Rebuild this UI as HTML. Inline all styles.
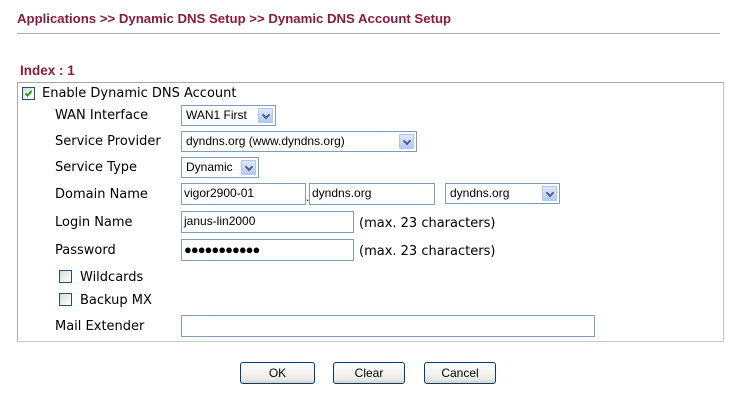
<!DOCTYPE html>
<html><head><style>
body{margin:0;width:739px;height:405px;background:#fff;position:relative;overflow:hidden;font-family:"DejaVu Sans",Verdana,sans-serif;font-size:13px;color:#000}
.a{position:absolute;white-space:nowrap}
.t{font-family:"Liberation Sans",Arial,sans-serif;font-weight:bold;color:#8b1a3b;font-size:13px}
.lbl{position:absolute;white-space:nowrap;line-height:15px}
.inp{position:absolute;box-sizing:border-box;border:1px solid #7f9db9;background:#fff;font-family:"Liberation Sans",Arial,sans-serif;font-size:12px;padding-left:4px;line-height:19px}
.sel .arr{position:absolute;right:2px;top:2px;width:15px;bottom:2px;background:linear-gradient(#dfe9fd,#b5c9f3);border:1px solid #b0c4ee;box-sizing:border-box;border-radius:1px}
.sel .arr:after{content:"";position:absolute;left:4px;width:4px;height:4px;border-right:2px solid #4d6185;border-bottom:2px solid #4d6185;transform:rotate(45deg);top:3px}
.cb{position:absolute;width:13px;height:13px;box-sizing:border-box;border:1px solid #1c5180;background:linear-gradient(135deg,#dcdcd6,#fff)}
.btn{position:absolute;box-sizing:border-box;height:22px;border:1px solid #003c74;border-radius:3px;background:linear-gradient(#fff,#ecebe6 80%,#d6d0c5);font-family:"Liberation Sans",Arial,sans-serif;font-size:12px;text-align:center;line-height:20px}
</style></head><body>
<div class="a t" style="left:17px;top:11px;font-size:13.2px">Applications &gt;&gt; Dynamic DNS Setup &gt;&gt; Dynamic DNS Account Setup</div>
<div class="a" style="left:17px;top:33px;width:703px;height:1px;background:#a9a9a9"></div>
<div class="a t" style="left:20px;top:63px;font-size:13.5px">Index : 1</div>
<div class="a" style="left:17px;top:82px;width:705px;height:258px;border:1px solid #a8a8a8;border-right-color:#c8c8c8;border-bottom-color:#c8c8c8"></div>

<div class="cb" style="left:22px;top:87px"><svg width="11" height="11" style="position:absolute;left:0;top:0"><path d="M2.5 5.5 L4.5 7.5 L8.5 3" stroke="#21a121" stroke-width="2" fill="none"/></svg></div>
<div class="lbl" style="left:42px;top:86px">Enable Dynamic DNS Account</div>

<div class="lbl" style="left:55px;top:108px">WAN Interface</div>
<div class="inp sel" style="left:181px;top:105px;width:95px;height:21px">WAN1 First<span class="arr"></span></div>

<div class="lbl" style="left:55px;top:134px">Service Provider</div>
<div class="inp sel" style="left:181px;top:131px;width:236px;height:21px">dyndns.org (www.dyndns.org)<span class="arr"></span></div>

<div class="lbl" style="left:55px;top:160px">Service Type</div>
<div class="inp sel" style="left:181px;top:157px;width:78px;height:21px">Dynamic<span class="arr"></span></div>

<div class="lbl" style="left:55px;top:187px">Domain Name</div>
<div class="inp" style="left:181px;top:183px;width:125px;height:22px;padding-left:2px">vigor2900-01</div>
<div class="a" style="left:306px;top:190px;font-family:'Liberation Sans',Arial;font-size:12px">.</div>
<div class="inp" style="left:309px;top:183px;width:126px;height:22px;padding-left:2px">dyndns.org</div>
<div class="inp sel" style="left:445px;top:183px;width:115px;height:21px">dyndns.org<span class="arr"></span></div>

<div class="lbl" style="left:55px;top:215px">Login Name</div>
<div class="inp" style="left:181px;top:211px;width:173px;height:22px;padding-left:2px">janus-lin2000</div>
<div class="lbl" style="left:359px;top:216px">(max. 23 characters)</div>

<div class="lbl" style="left:55px;top:243px">Password</div>
<div class="inp" style="left:181px;top:239px;width:173px;height:22px;padding-left:2px;font-size:13px;letter-spacing:-1px">●●●●●●●●●●●</div>
<div class="lbl" style="left:359px;top:244px">(max. 23 characters)</div>

<div class="cb" style="left:59px;top:270px"></div>
<div class="lbl" style="left:80px;top:270px">Wildcards</div>
<div class="cb" style="left:59px;top:293px"></div>
<div class="lbl" style="left:80px;top:293px">Backup MX</div>

<div class="lbl" style="left:55px;top:319px">Mail Extender</div>
<div class="inp" style="left:181px;top:315px;width:414px;height:22px"></div>

<div class="btn" style="left:240px;top:362px;width:75px">OK</div>
<div class="btn" style="left:333px;top:362px;width:72px">Clear</div>
<div class="btn" style="left:424px;top:362px;width:72px">Cancel</div>
</body></html>
